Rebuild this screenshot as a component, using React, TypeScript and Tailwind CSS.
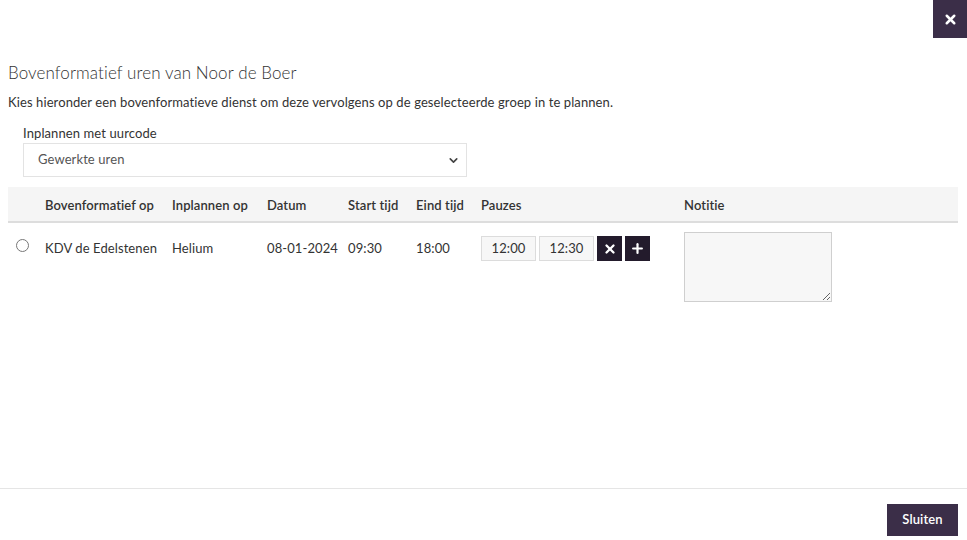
import { X, Plus, ChevronDown } from 'lucide-react'

const columns = [
  { label: '', w: 'w-[37px]' },
  { label: 'Bovenformatief op', w: 'w-[127px]' },
  { label: 'Inplannen op', w: 'w-[95px]' },
  { label: 'Datum', w: 'w-[81px]' },
  { label: 'Start tijd', w: 'w-[68px]' },
  { label: 'Eind tijd', w: 'w-[65px]' },
  { label: 'Pauzes', w: 'w-[203px]' },
  { label: 'Notitie', w: 'flex-1' },
]

export default function App() {
  return (
    <div
      className="w-[967px] h-[540px] bg-white text-[#333] flex flex-col overflow-hidden"
      style={{ fontFamily: 'Lato, "Liberation Sans", sans-serif' }}
    >
      {/* Top bar with close */}
      <div className="flex justify-end h-[38px]">
        <button className="w-[34px] h-[38px] bg-[#3b2e48] text-white flex items-center justify-center">
          <X size={15} strokeWidth={4} />
        </button>
      </div>

      {/* Body */}
      <div className="flex-1 px-[8px]">
        <h1 className="mt-[24px] text-[17px] leading-[22px] font-light tracking-[0.1px]">
          Bovenformatief uren van Noor de Boer
        </h1>
        <p className="mt-[9px] text-[13px] leading-[18px] tracking-[0.1px]">
          Kies hieronder een bovenformatieve dienst om deze vervolgens op de geselecteerde groep in te plannen.
        </p>

        <div className="ml-[15px] mt-[13px] w-[444px]">
          <label className="block text-[13px] leading-[18px] tracking-[0.1px]">Inplannen met uurcode</label>
          <div className="mt-[1px] h-[34px] border border-[#e3e3e3] flex items-center justify-between pl-[14px] pr-[6px] text-[13px] text-[#555] tracking-[0.1px]">
            <span>Gewerkte uren</span>
            <ChevronDown size={13} strokeWidth={3} className="text-[#444]" />
          </div>
        </div>

        {/* Table */}
        <div className="mt-[10px] w-[950px]">
          <div className="flex h-[36px] items-center pt-[3px] bg-[#f5f5f5] border-b-2 border-[#dddddd] text-[13px] font-semibold tracking-[0.1px]">
            {columns.map((c, i) => (
              <div key={i} className={`${c.w} shrink-0`}>
                {c.label}
              </div>
            ))}
          </div>
          <div className="flex pt-[9px] text-[13px] tracking-[0.1px]">
            <div className="w-[37px] shrink-0 pt-[7px] pl-[8px]">
              <div className="w-[13px] h-[13px] rounded-full border border-[#777]" />
            </div>
            <div className="w-[127px] shrink-0 pt-[7px]">KDV de Edelstenen</div>
            <div className="w-[95px] shrink-0 pt-[7px]">Helium</div>
            <div className="w-[81px] shrink-0 pt-[7px]">08-01-2024</div>
            <div className="w-[68px] shrink-0 pt-[7px]">09:30</div>
            <div className="w-[65px] shrink-0 pt-[7px]">18:00</div>
            <div className="w-[203px] shrink-0 pt-[4px] flex gap-[3px] items-start">
              <div className="w-[55px] h-[25px] bg-[#f7f7f7] border border-[#dcdcdc] flex items-center justify-center">12:00</div>
              <div className="w-[55px] h-[25px] bg-[#f7f7f7] border border-[#dcdcdc] flex items-center justify-center">12:30</div>
              <button className="w-[25px] h-[25px] bg-[#231b2c] text-white flex items-center justify-center">
                <X size={14} strokeWidth={4} />
              </button>
              <button className="w-[25px] h-[25px] bg-[#231b2c] text-white flex items-center justify-center">
                <Plus size={15} strokeWidth={3.5} />
              </button>
            </div>
            <div className="flex-1">
              <textarea className="w-[148px] h-[70px] bg-[#f7f7f7] border border-[#cfcfcf] block" />
            </div>
          </div>
        </div>
      </div>

      {/* Footer */}
      <div className="border-t border-[#e5e5e5] h-[52px] flex items-start justify-end pr-[9px] pt-[15px]">
        <button className="h-[32px] w-[71px] bg-[#3b2e48] text-white text-[13px] font-semibold tracking-[0.1px]">
          Sluiten
        </button>
      </div>
    </div>
  )
}
